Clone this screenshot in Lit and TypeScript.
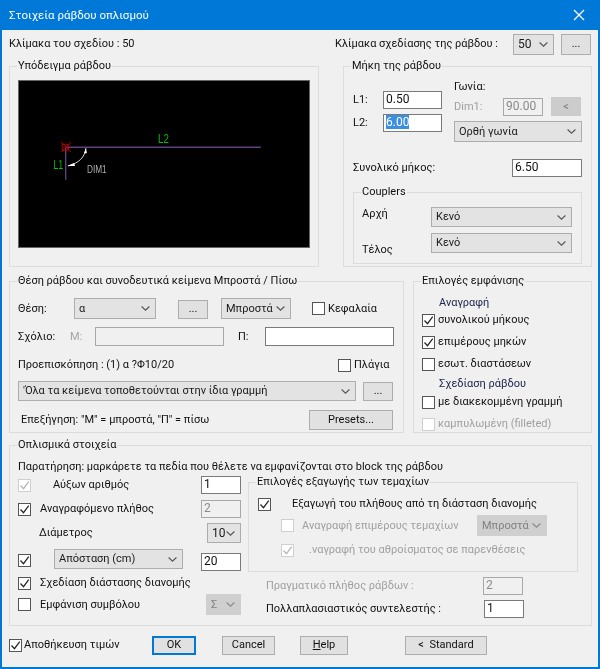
import { LitElement, html, css, svg } from "lit";
import { customElement } from "lit/decorators.js";

const chevron = svg`<svg class="chev" width="9" height="5" viewBox="0 0 9 5"><path d="M.6.5l3.9 3.7L8.4.5" fill="none" stroke="currentColor" stroke-width="1.1"/></svg>`;

const cb = (checked = false, disabled = false) => html`<span class="cb ${disabled ? "dis" : ""}">${checked
  ? svg`<svg width="11" height="11" viewBox="0 0 11 11"><path d="M1.5 5.5l3 3.2 5.2-7" fill="none" stroke="currentColor" stroke-width="1.2"/></svg>`
  : ""}</span>`;

const sel = (text: string, cls = "") => html`<div class="sel ${cls}"><span>${text}</span>${chevron}</div>`;

@customElement("app-root")
export class AppRoot extends LitElement {
  static styles = css`
    :host { display: block; width: 600px; height: 669px; box-sizing: border-box; background: #f0f0f0;
      border: solid #0078d7; border-width: 0 2px 2px 2px; font: 11px/14px Roboto, "Liberation Sans", sans-serif; color: #111; overflow: hidden; filter: blur(0.35px); }
    .title { height: 30px; margin: 0 -2px; padding: 0 15px 0 9px; background: #0078d7; color: #fff; display: flex; align-items: center; justify-content: space-between; font-size: 11.5px; }
    .body { padding-left: 7px; }
    .row { display: flex; align-items: center; }
    .top { margin-top: 4px; height: 20px; width: 584px; }
    .top .scale { width: 326px; }
    .top .scale2 { width: 178px; }
    .main { display: flex; margin-top: 12px; gap: 24px; }
    .g { border: 1px solid #dcdcdc; box-sizing: border-box; display: flex; flex-direction: column; }
    .lg { margin: -8px 0 0 7px; padding: 0 1px; background: #f0f0f0; width: fit-content; height: 14px; white-space: nowrap; }
    .g1 { width: 310px; height: 201px; }
    .canvas { display: block; margin: 7px 0 0 8px; border: 1px solid #666; box-sizing: border-box; width: 292px; height: 168px; background: #000; }
    .canvas text { font-family: "Liberation Sans", sans-serif; }
    .g2 { width: 249px; height: 201px; }
    .lens { display: flex; margin: 7px 0 0 9px; height: 62px; }
    .lens-l { width: 101px; padding-top: 11px; display: flex; flex-direction: column; gap: 5px; }
    .lens-l .row { height: 18px; }
    .lens-l .lb { width: 30px; }
    .lens-r { display: flex; flex-direction: column; }
    .gon { height: 14px; }
    .dimrow { margin-top: 3px; height: 19px; }
    .dimrow .lb { width: 49px; }
    .lens-r .sel { margin-top: 5px; }
    .total { margin: 17px 0 0 9px; height: 18px; width: 229px; justify-content: space-between; }
    .g3in { margin: 15px 0 0 9px; width: 229px; height: 72px; }
    .coup { display: grid; grid-template-columns: 69px 141px; grid-template-rows: 20px 20px; gap: 6px 0; margin: 8px 0 0 8px; }
    .coup .a { align-self: start; }
    .coup .t { align-self: end; margin-bottom: -4px; }
    .mid { display: flex; margin-top: 14px; gap: 9px; }
    .gp { width: 395px; height: 152px; }
    .gp .row { margin-left: 8px; }
    .r1 { margin-top: 10px; height: 21px; }
    .r1 .lb { width: 56px; }
    .r1 .btn { margin-left: 22px; margin-top: 1px; }
    .r1 .sel2 { margin-left: 13px; }
    .r1 .cb { margin-left: 21px; }
    .r1 .cap { margin-left: 3px; }
    .r2 { margin-top: 8px; height: 19px; }
    .r2 .lb { width: 52px; }
    .r2 .m { width: 25px; color: #a6a6a6; }
    .r2 .p { width: 27px; margin-left: 14px; }
    .r3 { margin-top: 11px; height: 16px; }
    .r3 .lb { width: 320px; }
    .r3 .cap { margin-left: 3px; }
    .r4 { margin-top: 8px; height: 20px; gap: 7px; }
    .r5 { margin-top: 9px; height: 20px; }
    .r5 .lb { width: 288px; padding-left: 3px; box-sizing: content-box; }
    .gv { width: 179px; height: 152px; }
    .head { height: 14px; margin-left: 25px; color: #20284f; }
    .h1 { margin-top: 8px; }
    .h2 { margin-top: 6px; }
    .cr { height: 14px; margin-left: 8px; gap: 3px; }
    .cr1 { margin-top: 3px; }
    .cr2 { margin-top: 8px; }
    .cr3 { margin-top: 4px; }
    .gb { width: 583px; height: 181px; margin-top: 12px; }
    .note { margin: 8px 0 0 8px; height: 14px; white-space: nowrap; }
    .cols { display: flex; margin: 2px 0 0 8px; gap: 7px; }
    .lc { width: 223px; display: flex; flex-direction: column; }
    .lc .row .input, .lc .row .sel { margin-left: auto; }
    .b1 { height: 18px; }
    .b1 .cap { margin-left: 22px; }
    .b2 { height: 18px; margin-top: 6px; }
    .b2 .cap, .b5 .cap, .b6 .cap { margin-left: 9px; }
    .b3 { height: 20px; margin-top: 5px; }
    .b3 .cap { margin-left: 21px; }
    .b4 { height: 22px; margin-top: 6px; }
    .b4 .sel { margin-left: 23px !important; align-self: flex-start; }
    .b4 .input { align-self: flex-end; }
    .b5 { height: 14px; margin-top: 5px; }
    .b6 { height: 21px; margin-top: 4px; }
    .b6 .cap { width: 154px; }
    .rc { width: 330px; padding-top: 6px; }
    .g6 { width: 330px; height: 90px; }
    .c1 { margin: 8px 0 0 9px; height: 14px; }
    .c1 .cap { margin-left: 21px; }
    .c2 { margin: 4px 0 0 32px; height: 21px; }
    .c2 .cap { margin-left: 8px; width: 175px; }
    .c3 { margin: 7px 0 0 32px; height: 14px; }
    .c3 .cap { margin-left: 15px; }
    .c4 { margin: 5px 0 0 18px; height: 18px; }
    .c4 .cap { width: 217px; }
    .c5 .cap { width: 218px; }
    .foot { margin-top: 9px; height: 20px; }
    .foot .cap { margin-left: 2px; width: 128px; }
    .foot .b-cancel { margin-left: 26px; }
    .foot .b-help { margin-left: 25px; }
    .foot .b-std { margin-left: 57px; }
    .dim { color: #a0a0a0; }
    .input { box-sizing: border-box; height: 18px; border: 1px solid #7a7a7a; background: #fff; padding-left: 2px; line-height: 15px; flex: none; white-space: nowrap; font-size: 12px; }
    .input.off { background: #f0f0f0; border-color: #a8a8a8; color: #8a8a8a; }
    .w59 { width: 59px; } .w40 { width: 40px; } .w70 { width: 70px; } .w129 { width: 129px; height: 19px; }
    .selx { background: #3a8fe0; color: #fff; }
    .sel { box-sizing: border-box; height: 20px; border: 1px solid #adadad; background: #e3e3e3; display: flex; align-items: center; justify-content: space-between; padding: 0 5px 0 4px; flex: none; white-space: nowrap; color: #1a1a1a; }
    .sel .chev { color: #555; flex: none; }
    .sel.off { background: #cfcfcf; border-color: #cfcfcf; color: #808080; }
    .sel.off .chev { color: #8a8a8a; }
    .s128 { width: 128px; height: 21px; } .s141 { width: 141px; } .s82 { width: 82px; height: 21px; } .s70 { width: 70px; height: 21px; }
    .s338 { width: 338px; } .s34 { width: 34px; font-size: 12px; } .s129 { width: 129px; } .s35 { width: 35px; height: 21px; } .s41 { width: 41px; height: 21px; font-size: 12px; }
    .btn { box-sizing: border-box; height: 19px; border: 1px solid #adadad; background: #e1e1e1; display: flex; align-items: center; justify-content: center; flex: none; color: #111; }
    .btn.off { background: #cccccc; border-color: #cccccc; color: #808080; }
    .w30 { width: 30px; } .w84 { width: 84px; height: 20px; } .w44 { width: 44px; } .w53 { width: 53px; } .w48 { width: 48px; } .w82 { width: 82px; }
    .ok { border: 2px solid #0078d7; }
    .lbtn { margin-left: 7px; height: 21px; }
    .lt { margin-left: 8px; }
    u { text-decoration: underline; }
    .cb { box-sizing: border-box; width: 13px; height: 13px; border: 1px solid #555; background: #fff; display: inline-flex; align-items: center; justify-content: center; flex: none; color: #222; }
    .cb.dis { border-color: #cfcfcf; color: #b5b5b5; }
    .cap, .lb { white-space: nowrap; flex: none; }
  `;

  render() {
    return html`
      <div class="title"><span>Στοιχεία ράβδου οπλισμού</span>
        <svg width="12" height="12" viewBox="0 0 12 12"><path d="M1 1l10 10M11 1L1 11" stroke="#fff" stroke-width="1.3"/></svg></div>
      <div class="body">
        <div class="row top">
          <span class="lb scale">Κλίμακα του σχεδίου : 50</span>
          <span class="lb scale2">Κλίμακα σχεδίασης της ράβδου :</span>
          ${sel("50", "s41")}
          <div class="btn w30 lbtn">...</div>
        </div>

        <div class="main">
          <section class="g g1">
            <div class="lg">Υπόδειγμα ράβδου</div>
            <svg class="canvas" viewBox="0 0 292 168">
              <path d="M46 67H244M46.5 67V100" stroke="#5f3f80" stroke-width="1.4" fill="none"/>
              <path d="M43 64h6v6h-6zM42 62l10 10M52 62L42 72" stroke="#c00000" stroke-width="1" fill="none"/>
              <path d="M67 68c-1 9-7 15-18 18" stroke="#d8d8d8" stroke-width="1" fill="none"/>
              <path d="M48 86l7-3 1 3z" fill="#fff"/>
              <path d="M67 68l-2 5 3 0z" fill="#fff"/>
              <text x="140" y="63" fill="#00c000" font-size="12" textLength="11" lengthAdjust="spacingAndGlyphs">L2</text>
              <text x="34" y="89" fill="#00c000" font-size="12" textLength="10" lengthAdjust="spacingAndGlyphs">L1</text>
              <text x="68" y="93" fill="#b0b0b0" font-size="11" textLength="20" lengthAdjust="spacingAndGlyphs">DIM1</text>
            </svg>
          </section>

          <section class="g g2">
            <div class="lg">Μήκη της ράβδου</div>
            <div class="lens">
              <div class="lens-l">
                <div class="row"><span class="lb">L1:</span><div class="input w59">0.50</div></div>
                <div class="row"><span class="lb">L2:</span><div class="input w59"><span class="selx">6.00</span></div></div>
              </div>
              <div class="lens-r">
                <div class="gon">Γωνία:</div>
                <div class="row dimrow"><span class="lb dim">Dim1:</span><div class="input off w40">90.00</div><div class="btn off w30 lt">&lt;</div></div>
                ${sel("Ορθή γωνία", "s128")}
              </div>
            </div>
            <div class="row total"><span class="lb">Συνολικό μήκος:</span><div class="input w70">6.50</div></div>
            <section class="g g3in">
              <div class="lg">Couplers</div>
              <div class="coup">
                <span class="lb a">Αρχή</span>${sel("Κενό", "s141")}
                <span class="lb t">Τέλος</span>${sel("Κενό", "s141")}
              </div>
            </section>
          </section>
        </div>

        <div class="mid">
          <section class="g gp">
            <div class="lg">Θέση ράβδου και συνοδευτικά κείμενα Μπροστά / Πίσω</div>
            <div class="row r1">
              <span class="lb">Θέση:</span>${sel("α", "s82")}
              <div class="btn w30">...</div>
              <div class="sel2">${sel("Μπροστά", "s70")}</div>
              ${cb()}<span class="cap">Κεφαλαία</span>
            </div>
            <div class="row r2">
              <span class="lb">Σχόλιο:</span><span class="m">Μ:</span><div class="input off w129"></div>
              <span class="p">Π:</span><div class="input w129"></div>
            </div>
            <div class="row r3"><span class="lb">Προεπισκόπηση : (1) α ?Φ10/20</span>${cb()}<span class="cap">Πλάγια</span></div>
            <div class="row r4">${sel("'Όλα τα κείμενα τοποθετούνται στην ίδια γραμμή", "s338")}<div class="btn w30">...</div></div>
            <div class="row r5"><span class="lb">Επεξήγηση: "Μ" = μπροστά,  "Π" = πίσω</span><div class="btn w84">Presets...</div></div>
          </section>

          <section class="g gv">
            <div class="lg">Επιλογές εμφάνισης</div>
            <div class="head h1">Αναγραφή</div>
            <div class="row cr cr1">${cb(true)}<span class="cap">συνολικού μήκους</span></div>
            <div class="row cr cr2">${cb(true)}<span class="cap">επιμέρους μηκών</span></div>
            <div class="row cr cr2">${cb()}<span class="cap">εσωτ. διαστάσεων</span></div>
            <div class="head h2">Σχεδίαση ράβδου</div>
            <div class="row cr cr3">${cb()}<span class="cap">με διακεκομμένη γραμμή</span></div>
            <div class="row cr cr2">${cb(false, true)}<span class="cap dim">καμπυλωμένη (filleted)</span></div>
          </section>
        </div>

        <section class="g gb">
          <div class="lg">Οπλισμικά στοιχεία</div>
          <div class="note">Παρατήρηση: μαρκάρετε τα πεδία που θέλετε να εμφανίζονται στο block της ράβδου</div>
          <div class="cols">
            <div class="lc">
              <div class="row b1">${cb(true, true)}<span class="cap">Αύξων αριθμός</span><div class="input w40">1</div></div>
              <div class="row b2">${cb(true)}<span class="cap">Αναγραφόμενο πλήθος</span><div class="input off w40">2</div></div>
              <div class="row b3"><span class="cap">Διάμετρος</span>${sel("10", "s34")}</div>
              <div class="row b4">${cb(true)}${sel("Απόσταση (cm)", "s129")}<div class="input w40">20</div></div>
              <div class="row b5">${cb(true)}<span class="cap">Σχεδίαση διάστασης διανομής</span></div>
              <div class="row b6">${cb()}<span class="cap">Εμφάνιση συμβόλου</span>${sel("Σ", "s35 off")}</div>
            </div>
            <div class="rc">
              <section class="g g6">
                <div class="lg">Επιλογές εξαγωγής των τεμαχίων</div>
                <div class="row c1">${cb(true)}<span class="cap">Εξαγωγή του πλήθους από τη διάσταση διανομής</span></div>
                <div class="row c2">${cb(false, true)}<span class="cap dim">Αναγραφή επιμέρους τεμαχίων</span>${sel("Μπροστά", "s70 off")}</div>
                <div class="row c3">${cb(true, true)}<span class="cap dim">.ναγραφή του αθροίσματος σε παρενθέσεις</span></div>
              </section>
              <div class="row c4"><span class="cap dim">Πραγματικό πλήθος ράβδων :</span><div class="input off w40">2</div></div>
              <div class="row c4 c5"><span class="cap">Πολλαπλασιαστικός συντελεστής :</span><div class="input w40">1</div></div>
            </div>
          </div>
        </section>

        <div class="row foot">
          ${cb(true)}<span class="cap">Αποθήκευση τιμών</span>
          <div class="btn w44 ok">OK</div>
          <div class="btn w53 b-cancel">Cancel</div>
          <div class="btn w48 b-help"><span><u>H</u>elp</span></div>
          <div class="btn w82 b-std">&lt;&nbsp;&nbsp;Standard</div>
        </div>
      </div>
    `;
  }
}
